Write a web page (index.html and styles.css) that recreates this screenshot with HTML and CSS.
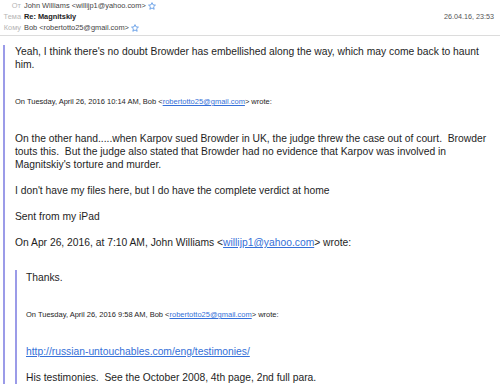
FILE: index.html
```html
<!DOCTYPE html>
<html lang="ru">
<head>
<meta charset="utf-8">
<title>Re: Magnitskiy</title>
<link rel="stylesheet" href="styles.css">
</head>
<body>
<header class="header">
  <div class="fields">
    <span class="lbl">От</span>
    <span class="val">John Williams &lt;willijp1@yahoo.com&gt;<svg class="star" viewBox="0 0 10 10"><path d="M5 0.8 L6.25 3.6 L9.3 3.9 L7 6 L7.7 9.1 L5 7.5 L2.3 9.1 L3 6 L0.7 3.9 L3.75 3.6 Z"/></svg></span>
    <span class="lbl">Тема</span>
    <span class="val subject">Re: Magnitskiy</span>
    <span class="lbl">Кому</span>
    <span class="val">Bob &lt;robertotto25@gmail.com&gt;<svg class="star" viewBox="0 0 10 10"><path d="M5 0.8 L6.25 3.6 L9.3 3.9 L7 6 L7.7 9.1 L5 7.5 L2.3 9.1 L3 6 L0.7 3.9 L3.75 3.6 Z"/></svg></span>
  </div>
  <div class="date">26.04.16, 23:53</div>
</header>
<main class="thread">
  <blockquote class="quote">
    <p>Yeah, I think there's no doubt Browder has embellished along the way, which may come back to haunt him.</p>
    <p class="attr">On Tuesday, April 26, 2016 10:14 AM, Bob &lt;<a href="#">robertotto25@gmail.com</a>&gt; wrote:</p>
    <p>On the other hand.....when Karpov sued Browder in UK, the judge threw the case out of court.&nbsp; Browder touts this.&nbsp; But the judge also stated that Browder had no evidence that Karpov was involved in Magnitskiy's torture and murder.</p>
    <p>I don't have my files here, but I do have the complete verdict at home</p>
    <p>Sent from my iPad</p>
    <p>On Apr 26, 2016, at 7:10 AM, John Williams &lt;<a href="#">willijp1@yahoo.com</a>&gt; wrote:</p>
    <blockquote class="quote2">
      <p>Thanks.</p>
      <p class="attr">On Tuesday, April 26, 2016 9:58 AM, Bob &lt;<a href="#">robertotto25@gmail.com</a>&gt; wrote:</p>
      <p><a href="#">http://russian-untouchables.com/eng/testimonies/</a></p>
      <p>His testimonies.&nbsp; See the October 2008, 4th page, 2nd full para.</p>
    </blockquote>
  </blockquote>
</main>
</body>
</html>
```
FILE: styles.css
```css
html, body {
  margin: 0;
  padding: 0;
  background: #fff;
}
body {
  font-family: "Liberation Sans", Arial, Helvetica, sans-serif;
  color: #1e1e1e;
  width: 500px;
  height: 387px;
  overflow: hidden;
}
.header {
  display: flex;
  justify-content: space-between;
  align-items: center;
  padding: 0 6px 2px 0;
  border-bottom: 1px solid #dcdcdc;
}
.fields {
  display: grid;
  grid-template-columns: 21px auto;
  column-gap: 3px;
  font-size: 7.4px;
  line-height: 11px;
}
.lbl {
  color: #b5b5b5;
  text-align: right;
}
.val {
  color: #444;
  display: flex;
  align-items: center;
}
.subject {
  font-weight: bold;
  color: #222;
}
.star {
  width: 8px;
  height: 8px;
  margin-left: 2px;
  fill: none;
  stroke: #3d84e0;
  stroke-width: 0.9;
  stroke-linejoin: round;
}
.date {
  font-size: 7.2px;
  color: #555;
}
.thread {
  margin-top: 9px;
}
.quote {
  margin: 0 8px 0 3px;
  border-left: 2px solid #9b9be8;
  padding-left: 10px;
}
.quote2 {
  margin: 21px 0 0 0;
  padding: 1px 0 0 9px;
  border-left: 2px solid #9b9be8;
}
p {
  margin: 0 0 13px;
  font-size: 10.3px;
  line-height: 13px;
}
.attr {
  font-size: 7.5px;
  line-height: 10px;
  margin: 26px 0 25px;
}
a {
  color: #3570d8;
  text-decoration: underline;
}
```
